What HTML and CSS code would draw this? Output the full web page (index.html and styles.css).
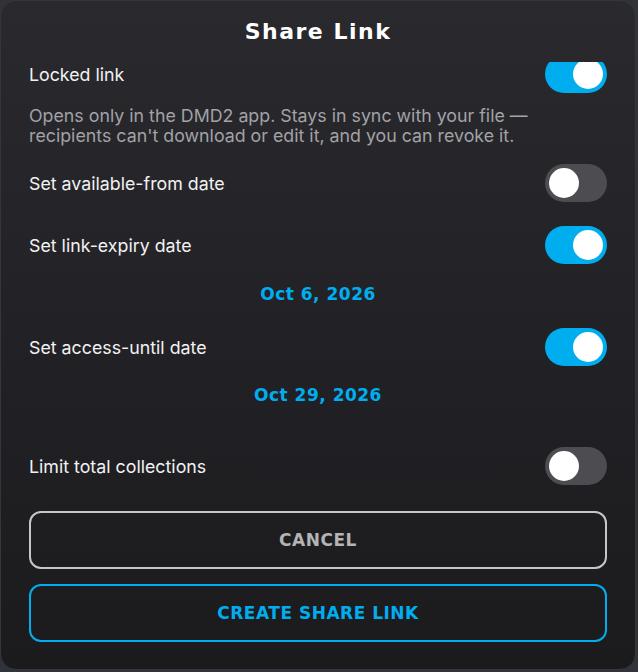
FILE: index.html
```html
<!DOCTYPE html>
<html lang="en">
<head>
    <meta charset="UTF-8">
    <meta name="viewport" content="width=device-width, initial-scale=1.0">
    <title>Share Link</title>
    <link rel="stylesheet" href="styles.css">
</head>
<body>
    <div class="modal">
        <h2 class="modal-title">Share Link</h2>

        <div class="modal-body">
            <!-- Locked link -->
            <div class="setting-row first">
                <span class="setting-label">Locked link</span>
                <div class="toggle on"><span class="knob"></span></div>
            </div>
            <p class="setting-hint">Opens only in the DMD2 app. Stays in sync with your file —<br>recipients can't download or edit it, and you can revoke it.</p>

            <div class="setting-row after-hint">
                <span class="setting-label">Set available-from date</span>
                <div class="toggle"><span class="knob"></span></div>
            </div>

            <div class="setting-row">
                <span class="setting-label">Set link-expiry date</span>
                <div class="toggle on"><span class="knob"></span></div>
            </div>
            <div class="date-value">Oct 6, 2026</div>

            <div class="setting-row">
                <span class="setting-label">Set access-until date</span>
                <div class="toggle on"><span class="knob"></span></div>
            </div>
            <div class="date-value second">Oct 29, 2026</div>

            <div class="setting-row last">
                <span class="setting-label">Limit total collections</span>
                <div class="toggle"><span class="knob"></span></div>
            </div>

            <div class="actions">
                <button class="btn btn-cancel">CANCEL</button>
                <button class="btn btn-create">CREATE SHARE LINK</button>
            </div>
        </div>
    </div>
</body>
</html>
```

FILE: styles.css
```css
body {
    margin: 0;
    background-color: #30333a;
    font-family: Inter, "Noto Sans", sans-serif;
}

.modal {
    width: 634px;
    height: 668px;
    border: 1px solid #35353b;
    border-radius: 16px;
    background: linear-gradient(#29292e, #1b1b1e);
    overflow: hidden;
}

.modal-title {
    margin: 17px 0 16px;
    text-align: center;
    font-family: "DejaVu Sans", sans-serif;
    font-size: 22px;
    font-weight: bold;
    line-height: 28px;
    letter-spacing: 1.5px;
    color: #ffffff;
}

.modal-body {
    height: 607px;
    overflow: hidden;
    padding: 0 28px;
}

.setting-row {
    display: flex;
    align-items: center;
    justify-content: space-between;
    height: 38px;
    margin-top: 24px;
}

.setting-row.first {
    margin-top: -7px;
}

.setting-row.after-hint {
    margin-top: 19px;
}

.setting-row.last {
    margin-top: 42px;
}

.setting-label {
    font-size: 17.8px;
    color: #f2f2f2;
    padding-top: 1px;
}

.setting-hint {
    margin: 13px 0 0;
    font-size: 17.8px;
    line-height: 19.5px;
    color: #a2a2a7;
}

.toggle {
    position: relative;
    width: 62px;
    height: 38px;
    border-radius: 19px;
    background-color: #4c4c51;
}

.toggle.on {
    background-color: #00aef0;
}

.knob {
    position: absolute;
    top: 4px;
    left: 4px;
    width: 30px;
    height: 30px;
    border-radius: 50%;
    background: #ffffff;
}

.toggle.on .knob {
    left: 28px;
}

.date-value {
    margin-top: 20px;
    text-align: center;
    font-family: "DejaVu Sans", sans-serif;
    font-size: 17px;
    font-weight: bold;
    line-height: 20px;
    letter-spacing: 0.5px;
    color: #00aef0;
}

.date-value.second {
    margin-top: 19px;
}

.actions {
    display: flex;
    flex-direction: column;
    gap: 15px;
    margin-top: 26px;
}

.btn {
    height: 58px;
    border-radius: 12px;
    background: transparent;
    font-family: "DejaVu Sans", sans-serif;
    font-size: 17px;
    font-weight: bold;
    letter-spacing: 0.5px;
    cursor: pointer;
}

.btn-cancel {
    border: 2px solid #c6c6c6;
    color: #b4b4b4;
}

.btn-create {
    border: 2px solid #00aef0;
    color: #00aef0;
}
```
